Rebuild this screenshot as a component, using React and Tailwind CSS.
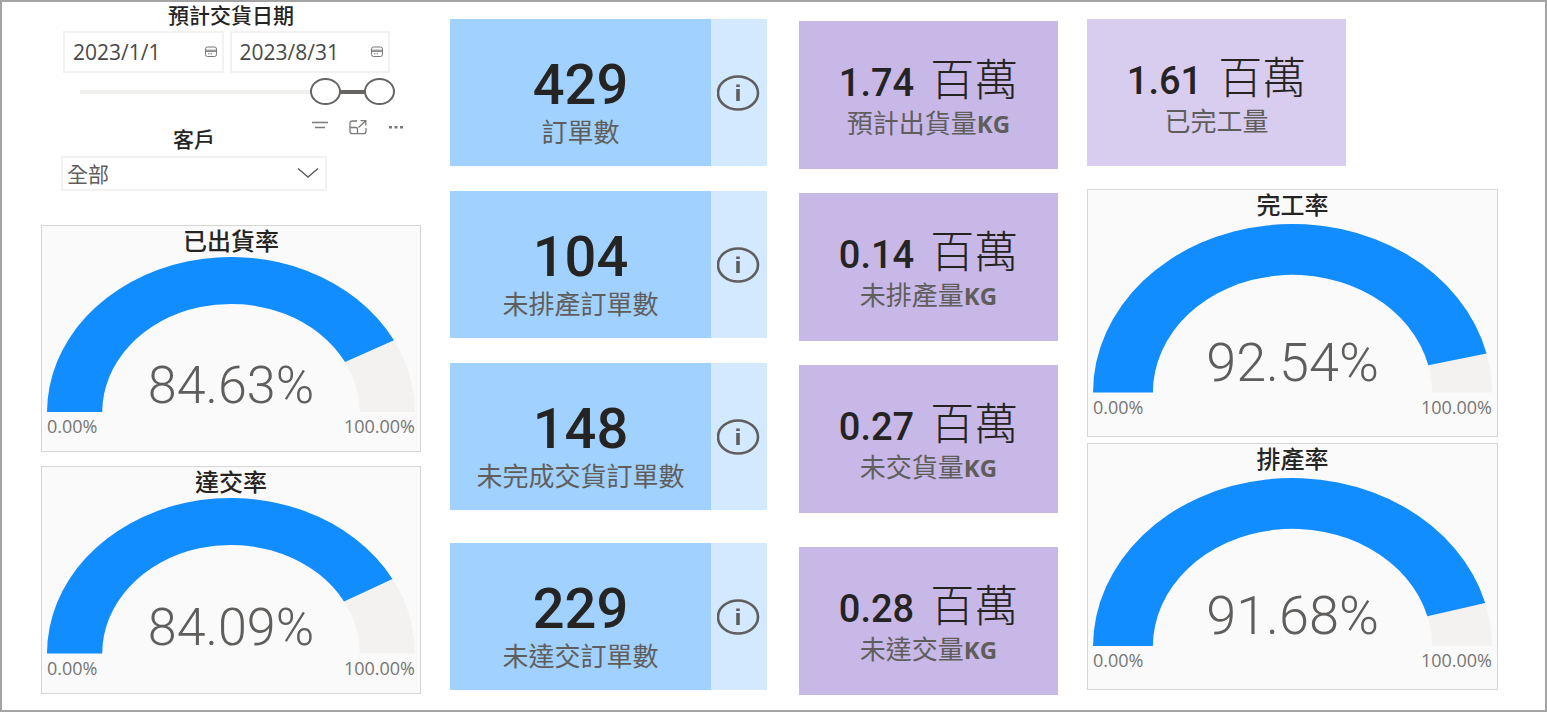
import { useState } from 'react'

const orderCards = [
  { value: '429', label: '訂單數' },
  { value: '104', label: '未排產訂單數' },
  { value: '148', label: '未完成交貨訂單數' },
  { value: '229', label: '未達交訂單數' },
]

const weightCards = [
  { value: '1.74', label: '預計出貨量', unit: 'KG' },
  { value: '0.14', label: '未排產量', unit: 'KG' },
  { value: '0.27', label: '未交貨量', unit: 'KG' },
  { value: '0.28', label: '未達交量', unit: 'KG' },
]

// 半圓弧的尺寸：外圈 200x169，內圈 140x118
const arcPath = (from, to) => {
  const point = (rx, ry, ratio) => {
    const angle = Math.PI * ratio
    return `${200 - rx * Math.cos(angle)} ${169 - ry * Math.sin(angle)}`
  }
  return [
    `M ${point(200, 169, from)}`,
    `A 200 169 0 0 1 ${point(200, 169, to)}`,
    `L ${point(140, 118, to)}`,
    `A 140 118 0 0 0 ${point(140, 118, from)}`,
    'Z',
  ].join(' ')
}

function Gauge({ title, value, large }) {
  return (
    <section className={`border border-[#d6d6d6] bg-[#fafafa] px-[5px] ${large ? 'pb-[17px]' : 'pb-[13px]'}`}>
      <h2 className={`text-center text-[24px] leading-[30px] font-medium text-[#252423] ${large ? 'mb-1' : 'mb-px'}`}>
        {title}
      </h2>
      <div className="relative">
        <svg viewBox="0 0 400 169" className="block w-full" aria-hidden="true">
          <path d={arcPath(0, 1)} fill="#f3f2f0" />
          <path d={arcPath(0, value / 100)} fill="#118dff" />
        </svg>
        <div
          className={`absolute inset-x-0 text-center font-[Roboto,sans-serif] leading-[52px] font-light text-[#605e5c] ${
            large ? 'bottom-1 text-[54px]' : 'bottom-0 text-[52px]'
          }`}
        >
          {value.toFixed(2)}%
        </div>
      </div>
      <div className="mt-0.5 flex justify-between text-[18px] leading-6 text-[#777674]">
        <span>0.00%</span>
        <span>100.00%</span>
      </div>
    </section>
  )
}

function OrderCard({ value, label }) {
  return (
    <div className="flex">
      <div className="flex-1 bg-[#a0d1ff] pt-[38px] pb-[18px] text-center">
        <div className="font-[Roboto,sans-serif] text-[56px] leading-[56px] font-medium text-[#252423]">{value}</div>
        <div className="mt-[3px] text-[26px] leading-8 text-[#605e5c]">{label}</div>
      </div>
      <button type="button" aria-label={`${label}說明`} className="flex w-14 items-center justify-center bg-[#d3e9ff]">
        <svg width="44" height="38" viewBox="0 0 44 38" fill="none" aria-hidden="true">
          <ellipse cx="21" cy="19" rx="20" ry="16.5" stroke="#605e5c" strokeWidth="2.6" />
          <path d="M19.200 10.500h3.600v2.500h-3.600zM19.200 15h3.600v12h-3.600z" fill="#605e5c" />
        </svg>
      </button>
    </div>
  )
}

function WeightCard({ value, label, unit, light }) {
  return (
    <div className={`pt-[34px] pb-[29px] text-center ${light ? 'bg-[#d8cdee]' : 'bg-[#c8b8e7]'}`}>
      <div className="h-12 text-[44px] leading-[48px] font-light whitespace-nowrap text-[#252423]">
        <span className="mr-4 font-[Roboto,sans-serif] text-[38px] font-medium">{value}</span>
        百萬
      </div>
      <div className="mt-1 text-[26px] leading-8 text-[#605e5c]">
        {label}
        {unit && <span className="text-[24px] font-bold">{unit}</span>}
      </div>
    </div>
  )
}

function DateBox({ label, value, onChange }) {
  return (
    <div className="flex h-[42px] min-w-0 flex-1 items-center border-2 border-[#f3f2f1] pr-1 pl-2">
      <input
        type="text"
        aria-label={label}
        value={value}
        onChange={(e) => onChange(e.target.value)}
        className="w-full min-w-0 text-[21px] leading-6 text-[#4a4846] outline-none"
      />
      <button type="button" aria-label={`選擇${label}`} className="shrink-0">
        <svg width="14" height="12" viewBox="0 0 14 12" fill="none" stroke="#7b7977" aria-hidden="true">
          <rect x="1.5" y="1" width="11" height="9.5" rx="2" />
          <path d="M1.5 4.2h11M1.5 5.4h11M4 7.8h1.5M6.5 7.8H8" />
        </svg>
      </button>
    </div>
  )
}

const rangeClass =
  'pointer-events-none absolute inset-0 m-0 h-full w-full appearance-none bg-transparent outline-none [&::-webkit-slider-thumb]:pointer-events-auto [&::-webkit-slider-thumb]:h-[27px] [&::-webkit-slider-thumb]:w-[31px] [&::-webkit-slider-thumb]:appearance-none [&::-webkit-slider-thumb]:rounded-[50%] [&::-webkit-slider-thumb]:border-2 [&::-webkit-slider-thumb]:border-[#666463] [&::-webkit-slider-thumb]:bg-white'

function DateFilter() {
  const [start, setStart] = useState('2023/1/1')
  const [end, setEnd] = useState('2023/8/31')
  const [range, setRange] = useState([82, 100])

  return (
    <section>
      <h2 className="text-center text-[21px] leading-6 font-medium text-[#252423]">預計交貨日期</h2>
      <div className="mt-1 mr-[31px] ml-[22px] flex gap-1.5">
        <DateBox label="開始日期" value={start} onChange={setStart} />
        <DateBox label="結束日期" value={end} onChange={setEnd} />
      </div>
      <div className="relative mt-[5px] mr-[26px] ml-[23px] flex h-[27px] items-center px-4">
        <div className="h-1 w-full bg-[#f0efee]">
          <div
            className="h-full bg-[#666463]"
            style={{ marginLeft: `${range[0]}%`, width: `${range[1] - range[0]}%` }}
          />
        </div>
        <input
          type="range"
          aria-label="開始日期滑桿"
          value={range[0]}
          onChange={(e) => setRange([Math.min(Number(e.target.value), range[1]), range[1]])}
          className={rangeClass}
        />
        <input
          type="range"
          aria-label="結束日期滑桿"
          value={range[1]}
          onChange={(e) => setRange([range[0], Math.max(Number(e.target.value), range[0])])}
          className={rangeClass}
        />
      </div>
    </section>
  )
}

function CustomerFilter() {
  return (
    <section className="relative mt-[22px] ml-5">
      <div className="absolute -top-2 right-4 flex items-center gap-5 text-[#7d7b79]">
        <button type="button" aria-label="篩選">
          <svg width="18" height="16" viewBox="0 0 18 16" fill="none" stroke="currentColor" aria-hidden="true">
            <path d="M1 3.5h16M4 8.5h10" strokeWidth="1.3" />
          </svg>
        </button>
        <button type="button" aria-label="焦點模式">
          <svg width="18" height="16" viewBox="0 0 18 16" fill="none" stroke="currentColor" strokeWidth="1.3" aria-hidden="true">
            <path d="M8 2H3.500Q1 2 1 4.200V12.500Q1 14.700 3.500 14.700H14.500Q17 14.700 17 12.500V9" />
            <path d="M1 8.500H6.500Q8.500 8.500 8.500 10.300V14.700M9.500 8.500L16.500 2M11.500 1.700H16.800V6.500" />
          </svg>
        </button>
        <button type="button" aria-label="更多選項">
          <svg width="18" height="16" viewBox="0 0 18 16" fill="currentColor" aria-hidden="true">
            <path d="M2 7h3v2.500H2zM7.500 7h3v2.500h-3zM13 7h3v2.500h-3z" />
          </svg>
        </button>
      </div>
      <div className="relative w-[266px]">
        <label htmlFor="customer" className="block text-center text-[21px] leading-6 font-medium text-[#252423]">
          客戶
        </label>
        <select
          id="customer"
          className="mt-[5px] block h-[35px] w-full appearance-none border-2 border-[#f3f2f1] bg-white pl-1 text-[21px] leading-6 text-[#605e5c] outline-none"
        >
          <option>全部</option>
        </select>
        <svg
          width="22"
          height="12"
          viewBox="0 0 22 12"
          fill="none"
          className="pointer-events-none absolute right-2 bottom-3"
          aria-hidden="true"
        >
          <path d="M1 1.500L11 10L21 1.500" stroke="#605e5c" strokeWidth="1.5" />
        </svg>
      </div>
    </section>
  )
}

export default function App() {
  return (
    <main className="grid min-h-screen grid-cols-[380fr_317fr_262fr_411fr] items-start gap-[29px] border-2 border-[#a3a3a3] bg-white pt-px pr-[47px] pb-2 pl-[39px] font-['Open_Sans','Noto_Sans_CJK_TC',sans-serif]">
      <div>
        <DateFilter />
        <CustomerFilter />
        <div className="mt-[34px] flex flex-col gap-3.5">
          <Gauge title="已出貨率" value={84.63} />
          <Gauge title="達交率" value={84.09} />
        </div>
      </div>

      <div className="flex flex-col gap-[25px] pt-4 *:last:mt-2">
        {orderCards.map((card) => (
          <OrderCard key={card.label} {...card} />
        ))}
      </div>

      <div className="flex flex-col gap-6 pt-[18px] pl-[3px] *:last:mt-2.5">
        {weightCards.map((card) => (
          <WeightCard key={card.label} {...card} />
        ))}
      </div>

      <div className="pt-4">
        <div className="w-[63%]">
          <WeightCard value="1.61" label="已完工量" light />
        </div>
        <div className="mt-[23px] flex flex-col gap-1.5">
          <Gauge title="完工率" value={92.54} large />
          <Gauge title="排產率" value={91.68} large />
        </div>
      </div>
    </main>
  )
}
